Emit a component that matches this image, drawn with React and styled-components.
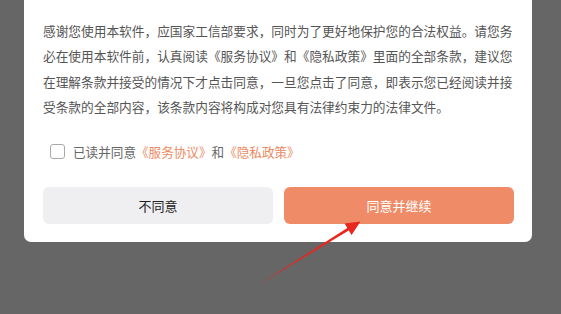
import React from 'react';
import styled, { createGlobalStyle } from 'styled-components';

const GlobalStyle = createGlobalStyle`
    html, body {
        margin: 0;
        padding: 0;
        background: #666666;
        overflow: hidden;
    }
    * {
        box-sizing: border-box;
    }
`;

const Page = styled.div`
    position: relative;
    width: 561px;
    height: 314px;
    padding: 0 29px 0 24px;
    font-family: 'Noto Sans CJK SC', 'Noto Sans', sans-serif;
`;

const Card = styled.div`
    background: #ffffff;
    border-radius: 0 0 7px 7px;
    padding: 18px 18px 18px 19px;
`;

const Paragraph = styled.p`
    margin: 0;
    font-size: 12.7px;
    line-height: 25.4px;
    color: #555555;
`;

const AgreeRow = styled.label`
    display: flex;
    align-items: center;
    gap: 8px;
    margin: 24px 0 0 7px;
    height: 16px;
    font-size: 12.6px;
    color: #666666;
`;

const Box = styled.span`
    width: 15px;
    height: 15px;
    border: 1.5px solid #a9a9a9;
    border-radius: 3px;
    flex-shrink: 0;
`;

const Link = styled.span`
    color: #ec8a63;
`;

const Buttons = styled.div`
    display: grid;
    grid-template-columns: 1fr 1fr;
    gap: 11px;
    margin-top: 27px;
`;

const Button = styled.button`
    height: 37px;
    border: none;
    border-radius: 6px;
    font-family: inherit;
    font-size: 13px;
    background: ${(p) => (p.primary ? '#ef8c67' : '#efeff1')};
    color: ${(p) => (p.primary ? '#ffffff' : '#222222')};
`;

const Arrow = styled.svg`
    position: absolute;
    left: 0;
    top: 0;
    pointer-events: none;
`;

export default function App() {
    return (
        <>
            <GlobalStyle />
            <Page>
                <Card>
                    <Paragraph>
                        感谢您使用本软件，应国家工信部要求，同时为了更好地保护您的合法权益。请您务必在使用本软件前，认真阅读《服务协议》和《隐私政策》里面的全部条款，建议您在理解条款并接受的情况下才点击同意，一旦您点击了同意，即表示您已经阅读并接受条款的全部内容，该条款内容将构成对您具有法律约束力的法律文件。
                    </Paragraph>
                    <AgreeRow>
                        <Box />
                        <span>
                            已读并同意<Link>《服务协议》</Link>和<Link>《隐私政策》</Link>
                        </span>
                    </AgreeRow>
                    <Buttons>
                        <Button>不同意</Button>
                        <Button primary>同意并继续</Button>
                    </Buttons>
                </Card>
                <Arrow width="561" height="314" viewBox="0 0 561 314">
                    <polygon
                        points="258,285 348.8,230.6 351.6,235 360.5,221.5 344.6,223.6 347.3,228"
                        fill="#e8271f"
                    />
                </Arrow>
            </Page>
        </>
    );
}
